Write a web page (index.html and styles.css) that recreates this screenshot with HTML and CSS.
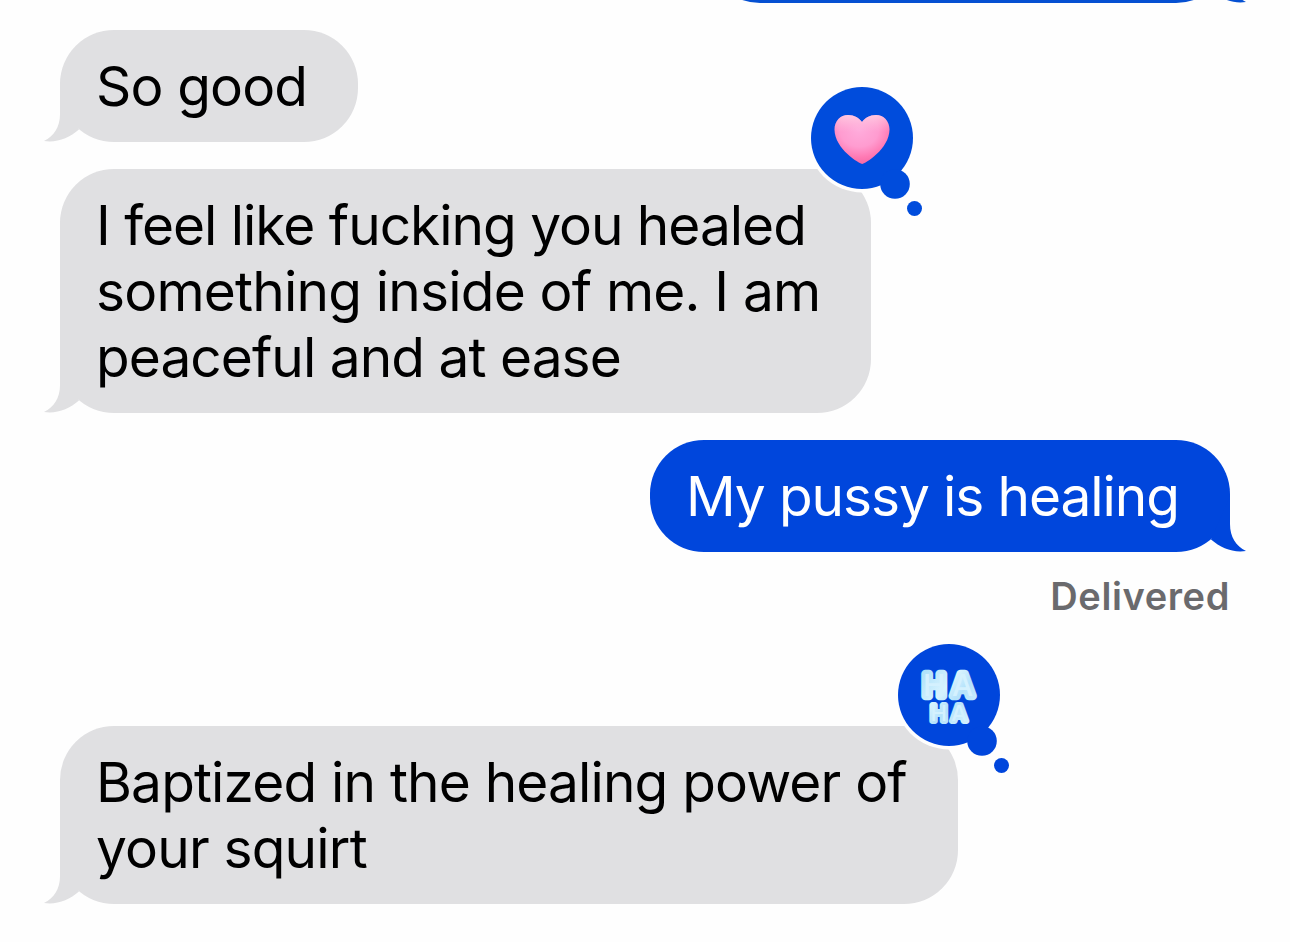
FILE: index.html
```html
<!DOCTYPE html>
<html lang="en">
<head>
  <meta charset="UTF-8" />
  <meta name="viewport" content="width=device-width, initial-scale=1.0"/>
  <title>Messages</title>
  <link rel="stylesheet" href="styles.css">
</head>
<body>
  <main class="chat">
    <div class="bubble sent previous">
      <svg class="tail" viewBox="0 0 36 56"><path d="M0 55C10 50 16 41 16 28V0L35 43.500C25 52 13 57 0 55Z"/></svg>
    </div>

    <div class="bubble received">
      <span class="line l1">So good</span>
      <svg class="tail" viewBox="0 0 36 56"><path d="M0 55C10 50 16 41 16 28V0L35 43.500C25 52 13 57 0 55Z"/></svg>
    </div>

    <div class="bubble received wide">
      <span class="line l2">I feel like fucking you healed</span>
      <span class="line l3">something inside of me. I am</span>
      <span class="line l4">peaceful and at ease</span>
      <svg class="tail" viewBox="0 0 36 56"><path d="M0 55C10 50 16 41 16 28V0L35 43.500C25 52 13 57 0 55Z"/></svg>
      <svg class="reaction" viewBox="0 0 120 140">
        <defs>
          <radialGradient id="pink" cx="0.45" cy="0.3" r="0.7">
            <stop offset="0" stop-color="#ffacdc"/>
            <stop offset="0.5" stop-color="#ff9cd0"/>
            <stop offset="0.8" stop-color="#ff7ab4"/>
            <stop offset="1" stop-color="#f76aa5"/>
          </radialGradient>
          <linearGradient id="shine" x1="0" y1="0" x2="0" y2="1">
            <stop offset="0" stop-color="#ffd9e8" stop-opacity="0.75"/>
            <stop offset="0.35" stop-color="#ffc3de" stop-opacity="0"/>
          </linearGradient>
        </defs>
        <circle class="ring" cx="55" cy="55" r="54.500"/>
        <g class="cloud"><circle cx="55" cy="55" r="51"/><circle cx="88" cy="101" r="14.800"/><circle cx="107.500" cy="125.500" r="7.500"/></g>
        <path fill="url(#pink)" d="M55.300 81C53 81 27.500 66 27.500 46.500C27.500 38 33.500 32 41 32C47.500 32 52 35 55 39C58 35 62.500 32 69 32C76.500 32 82.500 38 82.500 46.500C82.500 66 57.500 81 55.300 81Z"/>
        <path fill="url(#shine)" d="M55.300 81C53 81 27.500 66 27.500 46.500C27.500 38 33.500 32 41 32C47.500 32 52 35 55 39C58 35 62.500 32 69 32C76.500 32 82.500 38 82.500 46.500C82.500 66 57.500 81 55.300 81Z"/>
      </svg>
    </div>

    <div class="bubble sent">
      <span class="line l5">My pussy is healing</span>
      <svg class="tail" viewBox="0 0 36 56"><path d="M0 55C10 50 16 41 16 28V0L35 43.500C25 52 13 57 0 55Z"/></svg>
    </div>
    <div class="status">Delivered</div>

    <div class="bubble received last">
      <span class="line l6">Baptized in the healing power of</span>
      <span class="line l7">your squirt</span>
      <svg class="tail" viewBox="0 0 36 56"><path d="M0 55C10 50 16 41 16 28V0L35 43.500C25 52 13 57 0 55Z"/></svg>
      <svg class="reaction" viewBox="0 0 120 140">
        <defs>
          <linearGradient id="ice" x1="0" y1="0" x2="1" y2="1">
            <stop offset="0" stop-color="#a8dff9"/>
            <stop offset="0.4" stop-color="#d8f3fe"/>
            <stop offset="0.6" stop-color="#b4e2fb"/>
            <stop offset="1" stop-color="#dcf5ff"/>
          </linearGradient>
        </defs>
        <circle class="ring" cx="55" cy="55" r="54.500"/>
        <g class="cloud"><circle cx="55" cy="55" r="51"/><circle cx="88" cy="101" r="14.800"/><circle cx="107.500" cy="125.500" r="7.500"/></g>
        <text class="haha"><tspan class="big" x="29 58" y="55.800">HA</tspan><tspan class="small" x="36.500 57.300" y="81">HA</tspan></text>
      </svg>
    </div>
  </main>
</body>
</html>
```
FILE: styles.css
```css
* {
  margin: 0;
  padding: 0;
  box-sizing: border-box;
}

body {
  background: #fefefe;
  font-family: Inter, "Liberation Sans", sans-serif;
  overflow: hidden;
}

.chat {
  width: 1290px;
  height: 942px;
  padding: 0 60px;
  display: flex;
  flex-direction: column;
  overflow: hidden;
}

.bubble {
  position: relative;
  flex: none;
  padding: 23px 36px;
  border-radius: 54px;
  font-size: 55px;
  line-height: 66px;
}

.line {
  display: block;
  white-space: nowrap;
}

/* tracking per line */
.l1 { letter-spacing: -0.85px; }
.l2 { letter-spacing: -1.02px; }
.l3 { letter-spacing: -0.8px; }
.l4 { letter-spacing: -0.95px; }
.l5 { letter-spacing: -1.1px; }
.l6 { letter-spacing: -0.87px; word-spacing: 0.2px; }
.l7 { letter-spacing: -0.8px; }

.received {
  align-self: flex-start;
  width: 298px;
  margin-top: 27px;
  background: #e0e0e2;
  color: #000;
}

.sent {
  align-self: flex-end;
  width: 580px;
  margin-top: 27px;
  background: #0046dc;
  color: #fff;
}

.previous {
  width: 524px;
  height: 112px;
  margin-top: -109px;
  background: #0550d2;
}

.wide {
  width: 811px;
}

.last {
  width: 898px;
  margin-top: 106px;
}

/* bubble tail */
.tail {
  position: absolute;
  left: -16px;
  bottom: 0;
  width: 36px;
  height: 56px;
  fill: #e0e0e2;
}

.sent .tail {
  left: auto;
  right: -16px;
  transform: scaleX(-1);
  fill: #0046dc;
}

.previous .tail {
  fill: #0550d2;
}

/* tapback */
.reaction {
  position: absolute;
  top: -86px;
  right: -56px;
  width: 120px;
  height: 140px;
  overflow: visible;
}

.ring {
  fill: #fefefe;
}

.cloud {
  fill: #004cdc;
}

.last .cloud {
  fill: #0046dc;
}

.haha {
  fill: #d4f1fe;
  stroke: url(#ice);
  stroke-linejoin: round;
  paint-order: stroke;
  font-weight: 500;
}

.big {
  font-size: 30px;
  stroke-width: 8.5px;
}

.small {
  font-size: 22px;
  stroke-width: 6px;
}

.status {
  align-self: flex-end;
  height: 48px;
  margin-top: 19px;
  margin-bottom: 1px;
  font-size: 38px;
  font-weight: 600;
  letter-spacing: 0.6px;
  line-height: 50px;
  color: #6a6a6d;
}
```
